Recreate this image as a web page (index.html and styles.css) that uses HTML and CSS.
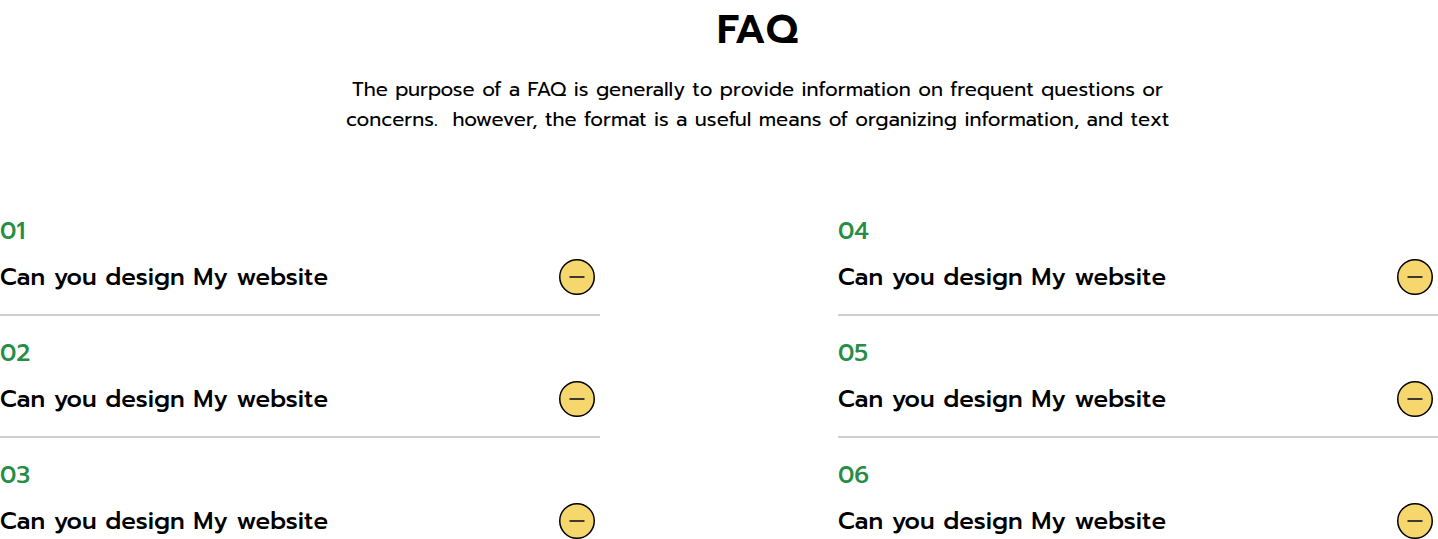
FILE: index.html
```html
<!DOCTYPE html>
<html lang="en">
<head>
<meta charset="utf-8">
<title>FAQ</title>
<link rel="stylesheet" href="styles.css">
</head>
<body>
<main class="faq">
  <header class="intro">
    <h1 class="heading">FAQ</h1>
    <p class="lead">The purpose of a FAQ is generally to provide information on frequent questions or<br>concerns.&nbsp; however, the format is a useful means of organizing information, and text</p>
  </header>
  <div class="columns">
    <div class="column">
      <section class="item"><div class="number">01</div><div class="row"><h2 class="question">Can you design My website</h2><svg class="toggle" viewBox="0 0 36 36"><circle cx="18" cy="18" r="17.25"/><path d="M10.5 18h15"/></svg></div></section>
      <section class="item"><div class="number">02</div><div class="row"><h2 class="question">Can you design My website</h2><svg class="toggle" viewBox="0 0 36 36"><circle cx="18" cy="18" r="17.25"/><path d="M10.5 18h15"/></svg></div></section>
      <section class="item"><div class="number">03</div><div class="row"><h2 class="question">Can you design My website</h2><svg class="toggle" viewBox="0 0 36 36"><circle cx="18" cy="18" r="17.25"/><path d="M10.5 18h15"/></svg></div></section>
    </div>
    <div class="column">
      <section class="item"><div class="number">04</div><div class="row"><h2 class="question">Can you design My website</h2><svg class="toggle" viewBox="0 0 36 36"><circle cx="18" cy="18" r="17.25"/><path d="M10.5 18h15"/></svg></div></section>
      <section class="item"><div class="number">05</div><div class="row"><h2 class="question">Can you design My website</h2><svg class="toggle" viewBox="0 0 36 36"><circle cx="18" cy="18" r="17.25"/><path d="M10.5 18h15"/></svg></div></section>
      <section class="item"><div class="number">06</div><div class="row"><h2 class="question">Can you design My website</h2><svg class="toggle" viewBox="0 0 36 36"><circle cx="18" cy="18" r="17.25"/><path d="M10.5 18h15"/></svg></div></section>
    </div>
  </div>
</main>
</body>
</html>
```
FILE: styles.css
```css
* { box-sizing: border-box; }
body { margin: 0; background: #fff; color: #000; font-family: Prompt, Lato, sans-serif; }
.faq { height: 539px; overflow: hidden; }
.intro { width: 840px; height: 194px; margin-left: 337.5px; text-align: center; }
.heading { margin: 0; font-size: 40px; line-height: 60px; font-weight: 600; }
.lead { margin: 14px 0 0; font-size: 20px; line-height: 30px; white-space: nowrap; }
.columns { display: flex; justify-content: space-between; }
.column { width: 600px; }
.item { height: 122px; padding: 19px 5px 0 0; border-bottom: 2px solid #cfcfcf; }
.number { height: 36px; font-size: 24px; line-height: 36px; font-weight: 500; color: #278d45; }
.row { display: flex; align-items: center; justify-content: space-between; height: 36px; margin-top: 10px; }
.question { margin: 0; font-size: 24px; line-height: 36px; font-weight: 500; white-space: nowrap; }
.toggle { width: 36px; height: 36px; fill: #f5d76e; stroke: #000; stroke-width: 1.5; }
.toggle path { stroke: #292929; stroke-width: 1.8; }
```
